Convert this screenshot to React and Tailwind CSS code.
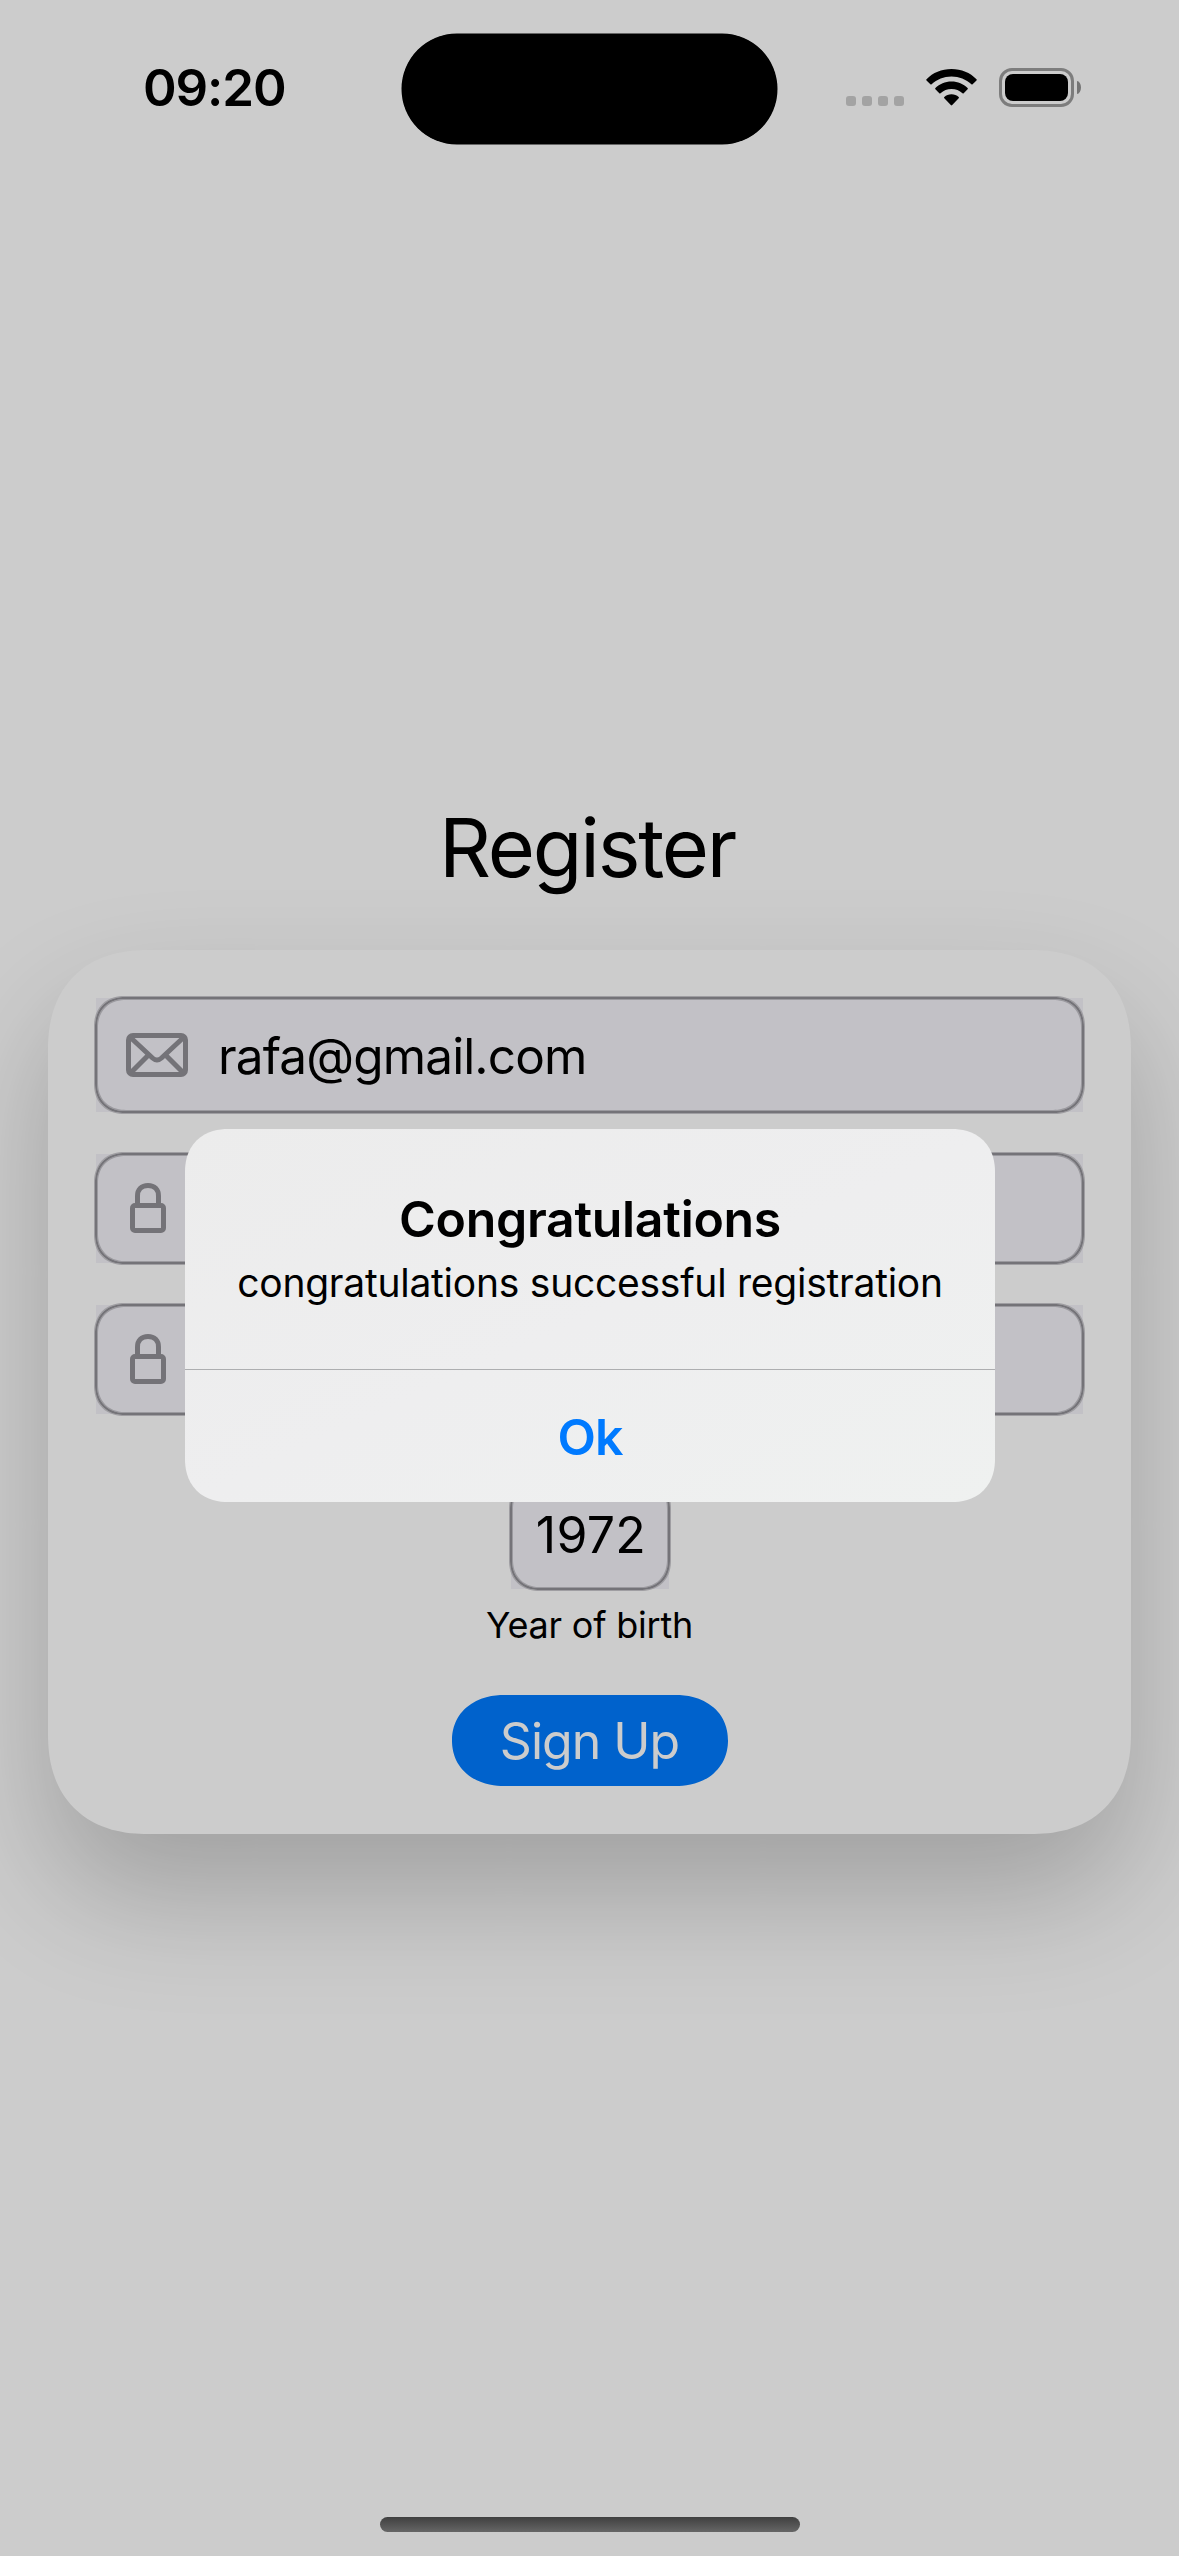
import React from "react";

function StatusBar() {
  return (
    <header className="flex h-[160px] items-start">
      <div className="mt-[58px] w-[259px] shrink-0 ml-[143px] text-[51px] leading-[60px] font-semibold tracking-[-1.1px]">09:20</div>
      <div className="mt-[34px] h-[110px] w-[375px] shrink-0 rounded-full bg-black shadow-[0_0_0_0.5px_#000000]" />
      <div className="mt-[96px] ml-[69px] flex shrink-0 gap-1.5">
        {[0, 1, 2, 3].map((i) => (
          <span key={i} className="size-2.5 rounded-[3px] bg-[#a3a3a3]" />
        ))}
      </div>
      <svg className="mt-[69px] ml-[22px] h-[37px] w-[51px] shrink-0" viewBox="0 0 51 37">
        <path d="M25.5 0C35.500 0 44 3.700 50.500 10.200C50.900 10.600 50.900 11 50.500 11.400L46.600 15.300C46.200 15.700 45.800 15.700 45.400 15.300C40 10.200 33.200 7.400 25.500 7.400C17.800 7.400 11 10.200 5.600 15.300C5.200 15.700 4.800 15.700 4.400 15.300L.5 11.400C.1 11 .1 10.600 .5 10.200C7 3.700 15.500 0 25.500 0Z" />
        <path d="M25.500 12.600C32 12.600 37.300 15 41.600 19.100C42 19.500 42 19.900 41.600 20.300L37.700 24.300C37.300 24.700 36.900 24.700 36.500 24.300C33.400 21.500 29.900 20 25.500 20C21.100 20 17.600 21.500 14.500 24.300C14.100 24.700 13.700 24.700 13.300 24.300L9.400 20.300C9 19.900 9 19.500 9.400 19.100C13.700 15 19 12.600 25.500 12.600Z" />
        <path d="M25.500 25.300C28.400 25.300 30.700 26.300 32.700 28C33.100 28.400 33.100 28.800 32.700 29.200L26.200 36C25.700 36.600 25.300 36.600 24.800 36L18.300 29.200C17.900 28.800 17.900 28.400 18.300 28C20.300 26.300 22.600 25.300 25.500 25.300Z" />
      </svg>
      <div className="mt-[68px] ml-[22px] h-[39px] w-[75px] shrink-0 rounded-[13px] border-[3px] border-[#7d7d7d] p-[3px]">
        <div className="h-full w-full rounded-[8px] bg-black" />
      </div>
      <div className="mt-[81px] ml-[3px] h-[13px] w-[4px] shrink-0 rounded-r-[4px_6.5px] bg-[#757575]" />
    </header>
  );
}

function Field({ className, children }) {
  return (
    <div className={`relative flex items-center bg-[#c2c1c6] ${className}`}>
      {children}
      <div className="absolute -inset-px rounded-[30px] border-2 border-[#747378] shadow-[0_0_0_1px_#9f9ea2,inset_0_0_0_1px_#9b9a9f] [corner-shape:superellipse(1.15)]" />
    </div>
  );
}

function EnvelopeIcon() {
  return (
    <svg className="h-[44px] w-[62px] shrink-0" viewBox="0 0 62 44" fill="none" stroke="#747378" strokeWidth="5">
      <rect x="2.5" y="2.5" width="57" height="39" rx="4.500" />
      <path d="M4.500 4.500L26.500 25Q31 29 35.500 25L57.500 4.500" />
      <path d="M4.500 40L22.500 22M57.500 40L39.500 22" />
    </svg>
  );
}

function LockIcon() {
  return (
    <svg className="mb-px h-[50px] w-[36px] shrink-0" viewBox="0 0 36 50" fill="none" stroke="#747378" strokeWidth="5">
      <rect x="2.500" y="22.500" width="31" height="25" rx="2.500" />
      <path d="M7.500 22V13C7.500 6.500 11.500 2.500 18 2.500S28.500 6.500 28.500 13V22" />
    </svg>
  );
}

function Dialog() {
  return (
    <div className="absolute top-[1129px] left-[185px] flex h-[373px] w-[810px] flex-col overflow-hidden rounded-[43px] bg-linear-to-br from-[#ececec] via-[#eeeeef] to-[#eff1f0] text-center [corner-shape:superellipse(1.15)]">
      <div className="h-[241px] border-b border-[#adaeb0] pt-[60px]">
        <h2 className="text-[50px] leading-[60px] font-semibold tracking-[-0.3px]">Congratulations</h2>
        <p className="mt-2.5 text-[39px] leading-[48px] tracking-[-0.25px] whitespace-nowrap">congratulations successful registration</p>
      </div>
      <button className="flex-1 pt-0.5 text-[50px] leading-[60px] font-semibold tracking-[-1px] text-[#007aff]">Ok</button>
    </div>
  );
}

export default function App() {
  return (
    <div className="relative flex h-[2556px] w-[1179px] flex-col overflow-hidden bg-[#cccccc] font-[Inter,sans-serif] text-black">
      <StatusBar />
      <h1 className="mt-[638px] pr-[5px] text-center text-[81px] leading-[100px] tracking-[-2.2px]">Register</h1>
      <main className="mx-12 mt-[52px] flex h-[884px] flex-col items-center rounded-[100px] bg-[#cccccc] p-12 shadow-[0_60px_120px_rgba(0,0,0,0.21)] [corner-shape:superellipse(1.2)]">
        <Field className="h-[114px] w-full gap-[30px] pl-[30px]">
          <EnvelopeIcon />
          <span className="pt-0.5 text-[49.5px] leading-[60px] tracking-[-0.87px]">rafa@gmail.com</span>
        </Field>
        <Field className="mt-[42px] h-[109px] w-full pl-[34px]">
          <LockIcon />
        </Field>
        <Field className="mt-[42px] h-[109px] w-full pl-[34px]">
          <LockIcon />
        </Field>
        <Field className="mt-[66px] h-[109px] w-[158px] justify-center pl-[3px] text-[50px] leading-[60px] tracking-[0.3px]">1972</Field>
        <p className="mt-3 text-[36px] leading-[48px] tracking-[-0.22px]">Year of birth</p>
        <button className="mt-[46px] h-[91px] w-[276px] rounded-[52px/45.5px] bg-[#0062cc] text-[50px] leading-[60px] tracking-[-1px] text-[#cccccc] [corner-shape:superellipse(1.1)]">Sign Up</button>
      </main>
      <div className="mx-auto mt-auto mb-6 h-[15px] w-[420px] rounded-full bg-linear-to-b from-[#404040] to-[#666666]" />
      <Dialog />
    </div>
  );
}
